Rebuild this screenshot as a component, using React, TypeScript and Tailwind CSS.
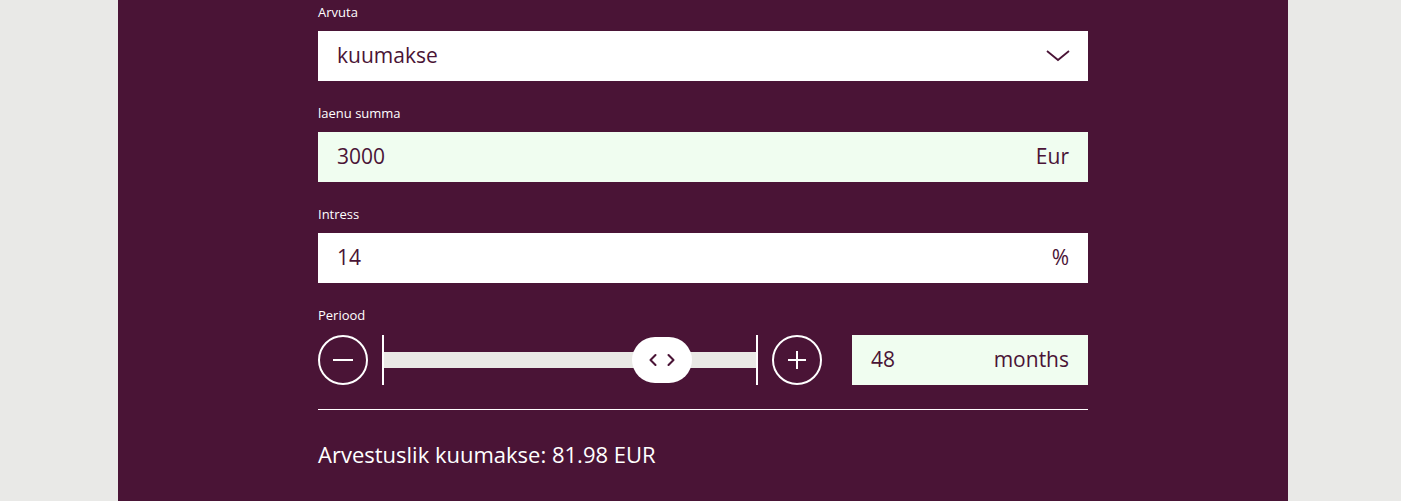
import { ChevronLeft, ChevronRight } from 'lucide-react';

const font = { fontFamily: '"Open Sans", "Liberation Sans", sans-serif' };

function Field({ label, value, unit, green }: { label: string; value: string; unit?: string; green?: boolean }) {
  return (
    <div className="mb-[22px]">
      <div className="h-5 mb-[9px] text-[13px] leading-5 text-white">{label}</div>
      <div
        className={`h-[50px] flex items-center justify-between px-[19px] text-[21px] text-[#4a1436] ${
          green ? 'bg-[#f0fdf0]' : 'bg-white'
        }`}
      >
        <span>{value}</span>
        {unit && <span>{unit}</span>}
      </div>
    </div>
  );
}

export default function App() {
  return (
    <div className="min-h-[501px] bg-[#e9e9e7] flex justify-center" style={font}>
      <div className="w-[1170px] ml-[5px] bg-[#4a1436] flex justify-center">
        <div className="w-[770px] pt-[2px] pb-10">
          <div className="mb-[22px]">
            <div className="h-5 mb-[9px] text-[13px] leading-5 text-white">Arvuta</div>
            <div className="h-[50px] flex items-center justify-between pl-[19px] pr-[18px] bg-white text-[21px] text-[#4a1436]">
              <span>kuumakse</span>
              <svg width="24" height="14" viewBox="0 0 24 14" fill="none" stroke="currentColor" strokeWidth="1.8">
                <path d="M1 2 L12 11 L23 2" />
              </svg>
            </div>
          </div>
          <Field label="laenu summa" value="3000" unit="Eur" green />
          <Field label="Intress" value="14" unit="%" />
          <div>
            <div className="h-5 mb-[9px] text-[13px] leading-5 text-white">Periood</div>
            <div className="flex items-center h-[51px]">
              <button className="w-[50px] h-[50px] rounded-full border-2 border-white flex items-center justify-center text-white">
                <svg width="22" height="22" viewBox="0 0 22 22" stroke="currentColor" strokeWidth="2">
                  <path d="M1 11 H21" />
                </svg>
              </button>
              <div className="ml-[14px] w-[2px] h-[50px] bg-white" />
              <div className="relative w-[372px] h-4 bg-[#e9e9e5]">
                <div className="absolute left-[248px] top-1/2 -translate-y-1/2 w-[60px] h-[46px] rounded-full bg-white flex items-center justify-center text-[#4a1436]">
                  <ChevronLeft className="w-5 h-5 -mr-[1px]" strokeWidth={2.5} />
                  <ChevronRight className="w-5 h-5 -ml-[1px]" strokeWidth={2.5} />
                </div>
              </div>
              <div className="w-[2px] h-[50px] bg-white" />
              <button className="ml-[14px] w-[50px] h-[50px] rounded-full border-2 border-white flex items-center justify-center text-white">
                <svg width="22" height="22" viewBox="0 0 22 22" stroke="currentColor" strokeWidth="2">
                  <path d="M2 11 H20 M11 2 V20" />
                </svg>
              </button>
              <div className="ml-[30px] flex-1 h-[50px] bg-[#f0fdf0] flex items-center justify-between pl-[19px] pr-[19px] text-[21px] text-[#4a1436]">
                <span>48</span>
                <span>months</span>
              </div>
            </div>
          </div>
          <div className="mt-[24px] h-px bg-white" />
          <div className="mt-[28px] text-[22px] text-white font-medium">Arvestuslik kuumakse: 81.98 EUR</div>
        </div>
      </div>
    </div>
  );
}
